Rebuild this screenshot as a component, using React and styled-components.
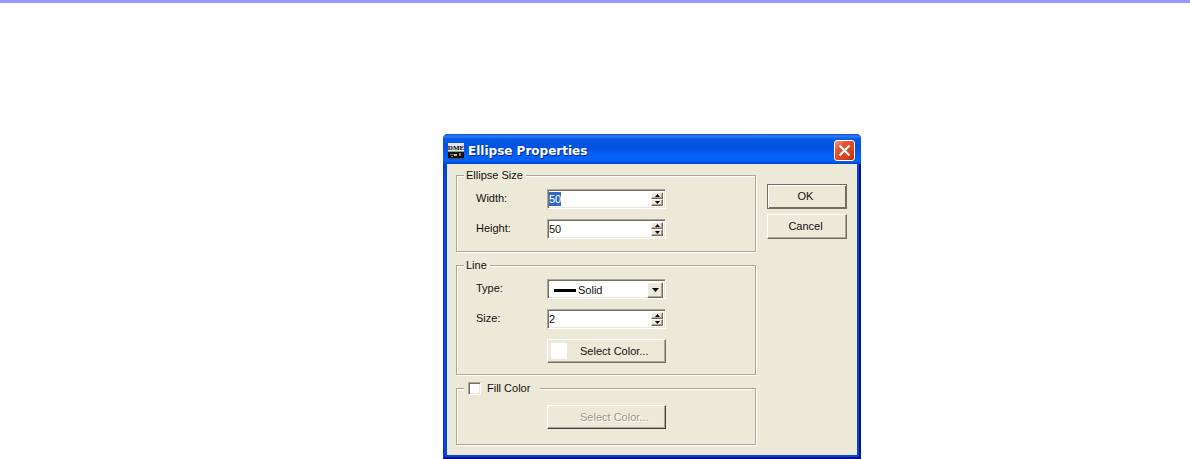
import styled, { createGlobalStyle, css } from "styled-components";
import { useEffect, useRef, useState } from "react";

const FACE = "#ece9d8";
const SHADOW = "#aca899";
const DARK = "#716f64";

const GlobalStyle = createGlobalStyle`
  * {
    box-sizing: border-box;
  }

  body {
    margin: 0;
    background: #fff;
    color: #111;
    font: 11px/13px "Liberation Sans", Arial, sans-serif;
  }

  button, input, select {
    font: inherit;
    color: inherit;
    margin: 0;
    outline: none;
  }
`;

const raised = css`
  border: 1px solid;
  border-color: #fff ${DARK} ${DARK} #fff;
  box-shadow: inset -1px -1px 0 ${SHADOW};
  background: ${FACE};
`;

const sunken = css`
  border: 1px solid;
  border-color: ${SHADOW} #fff #fff ${SHADOW};
  box-shadow: inset 1px 1px 0 ${DARK}, inset -1px -1px 0 ${FACE};
  background: #fff;
`;

const Page = styled.main`
  border-top: 3px solid #9999ff;
  padding: 131px 0 0 443px;
`;

const Dialog = styled.section`
  width: 418px;
  border-radius: 5px 5px 0 0;
  background: #0843dc;
  box-shadow: inset 1px 0 0 #0831d9, inset -2px -2px 0 #00138c;
  padding: 0 4px 4px;
`;

const TitleBar = styled.header`
  display: flex;
  align-items: center;
  gap: 4px;
  height: 30px;
  margin: 0 -4px;
  padding: 3px 6px 0 5px;
  border-radius: 5px 5px 0 0;
  background: linear-gradient(
    #0a48c8 0,
    #2a80f4 2px,
    #0a5ae6 5px,
    #0052e0 12px,
    #0660fa 23px,
    #0560f8 27px,
    #0344c8 30px
  );
`;

const Title = styled.h1`
  flex: 1;
  margin: 0;
  color: #fff;
  font: bold 12px/16px "DejaVu Sans", sans-serif;
  text-shadow: 1px 1px 0 #0a2f8c;
`;

const CloseButton = styled.button`
  display: grid;
  place-items: center;
  width: 21px;
  height: 21px;
  padding: 0;
  border: 1px solid #fff;
  border-radius: 3px;
  background: linear-gradient(135deg, #f0a088 0, #e0573a 30%, #d8421c 70%, #b8300c);
`;

const Body = styled.form`
  display: grid;
  grid-template-columns: 1fr 80px;
  gap: 11px;
  padding: 5px 10px 10px 9px;
  background: ${FACE};
`;

const Groups = styled.div`
  display: grid;
  gap: 7px;
`;

const Actions = styled.div`
  display: flex;
  flex-direction: column;
  gap: 5px;
  padding-top: 15px;
`;

const Group = styled.fieldset`
  display: grid;
  gap: ${({ $gap = 10 }) => $gap}px;
  min-width: 0;
  margin: 0;
  padding: ${({ $top = 7, $bottom }) => `${$top}px 0 ${$bottom}px 19px`};
  border: 1px solid ${SHADOW};
  box-shadow: 1px 1px 0 #fff, inset 1px 1px 0 #fff;
`;

const Legend = styled.legend`
  display: flex;
  align-items: center;
  height: 13px;
  margin-left: -12px;
  padding: 0 3px 0 2px;
  background: ${FACE};
`;

const CheckLegend = styled(Legend)`
  padding: 0 10px 0 4px;
`;

const CheckLabel = styled.label`
  display: flex;
  align-items: center;
  gap: 6px;
`;

const CheckBox = styled.input`
  appearance: none;
  width: 13px;
  height: 13px;
  ${sunken}

  &:checked {
    background: radial-gradient(#000 3px, #fff 4px);
  }
`;

const Row = styled.div`
  display: grid;
  grid-template-columns: 71px 119px;
  align-items: start;
  line-height: 18px;
`;

const FieldBox = styled.div`
  display: flex;
  height: 20px;
  padding: 2px 2px 2px 1px;
  ${sunken}
`;

const FieldInput = styled.input`
  flex: 1;
  min-width: 0;
  padding: 0;
  border: 0;
  background: none;
  line-height: 15px;

  &::selection {
    background: #316ac5;
    color: #fff;
  }
`;

const Arrows = styled.div`
  display: grid;
  grid-template-rows: 1fr 1fr;
  width: 12px;
`;

const ArrowButton = styled.button`
  display: grid;
  place-items: center;
  padding: 0;
  ${raised}
`;

const Combo = styled.div`
  display: grid;
  grid-template-columns: 1fr 16px;
  align-items: center;
  height: 20px;
  padding: 2px;
  ${sunken}

  svg {
    grid-row: 1;
    pointer-events: none;
  }
`;

const Select = styled.select`
  appearance: none;
  grid-area: 1 / 1 / 2 / 3;
  width: 100%;
  height: 16px;
  padding: 0 16px 0 28px;
  border: 0;
  background: none;
  line-height: 15px;
`;

const LineSample = styled.svg`
  grid-column: 1;
  margin-left: 4px;
`;

const DropArrow = styled.span`
  grid-area: 1 / 2;
  display: grid;
  place-items: center;
  height: 16px;
  pointer-events: none;
  ${raised}
`;

const PushButton = styled.button`
  height: 25px;
  padding: 0 3px 0 0;
  ${raised}
  ${({ $default }) =>
    $default &&
    css`
      border-color: ${DARK};
      box-shadow: inset 1px 1px 0 #fff, inset -1px -1px 0 ${DARK};
    `}
`;

const ColorButton = styled.button`
  grid-column: 2;
  display: grid;
  grid-template-columns: 16px 1fr;
  align-items: center;
  gap: 13px;
  height: 24px;
  padding: 0 3px;
  text-align: left;
  ${raised}

  &:disabled {
    border-color: #fff #404040 #404040 #fff;
    color: #9a9788;
    text-shadow: 1px 1px 0 #fff;
  }
`;

const Swatch = styled.span`
  height: 16px;
  background: ${({ $color }) => $color};
`;

const AppIcon = () => (
  <svg width="16" height="16" viewBox="0 0 16 16" aria-hidden="true">
    <rect width="16" height="8" fill="#e4e4ec" />
    <text
      x="8"
      y="7"
      textAnchor="middle"
      fontFamily="Liberation Serif, serif"
      fontWeight="bold"
      fontSize="7"
      fill="#000"
    >
      DME
    </text>
    <rect y="8" width="16" height="8" fill="#111" />
    <path d="M0 8.5h16" stroke="#9a9aa4" />
    <path d="M2 11.5h4M3 13.5h2" stroke="#777" />
    <path d="M6 11h3v2H6z" fill="#e8c21c" />
    <path d="M11 10h2v3h-2z" fill="#7080a0" />
    <path d="M0 15.5h16" stroke="#3c4c70" />
  </svg>
);

const Triangle = ({ up, size = 5 }) => {
  const h = (size + 1) / 2;
  const points = up ? `0,${h} ${size},${h} ${size / 2},0` : `0,0 ${size},0 ${size / 2},${h}`;
  return (
    <svg width={size} height={h} aria-hidden="true">
      <polygon points={points} />
    </svg>
  );
};

const NumberField = ({ id, label, initial, selected }) => {
  const [value, setValue] = useState(initial);
  const ref = useRef(null);

  useEffect(() => {
    if (selected) {
      ref.current.focus();
      ref.current.select();
    }
  }, [selected]);

  const step = (n) => setValue((p) => String(Math.max(0, Number(p) + n)));

  return (
    <Row>
      <label htmlFor={id}>{label}</label>
      <FieldBox>
        <FieldInput
          id={id}
          ref={ref}
          inputMode="numeric"
          value={value}
          onChange={(e) => setValue(e.target.value)}
        />
        <Arrows>
          <ArrowButton type="button" aria-label={`Increase ${id}`} onClick={() => step(1)}>
            <Triangle up />
          </ArrowButton>
          <ArrowButton type="button" aria-label={`Decrease ${id}`} onClick={() => step(-1)}>
            <Triangle />
          </ArrowButton>
        </Arrows>
      </FieldBox>
    </Row>
  );
};

const App = () => {
  const [fill, setFill] = useState(false);

  return (
    <>
      <GlobalStyle />
      <Page>
        <Dialog role="dialog" aria-labelledby="title">
          <TitleBar>
            <AppIcon />
            <Title id="title">Ellipse Properties</Title>
            <CloseButton type="button" aria-label="Close">
              <svg width="13" height="13" viewBox="0 0 13 13" aria-hidden="true">
                <path d="M1.5 1.5l10 10M11.5 1.5l-10 10" stroke="#fff" strokeWidth="2" />
              </svg>
            </CloseButton>
          </TitleBar>
          <Body onSubmit={(e) => e.preventDefault()}>
            <Groups>
              <Group $bottom={12}>
                <Legend>Ellipse Size</Legend>
                <NumberField id="width" label="Width:" initial="50" selected />
                <NumberField id="height" label="Height:" initial="50" />
              </Group>
              <Group $bottom={11}>
                <Legend>Line</Legend>
                <Row>
                  <label htmlFor="type">Type:</label>
                  <Combo>
                    <Select id="type">
                      <option>Solid</option>
                    </Select>
                    <LineSample width="22" height="3" aria-hidden="true">
                      <rect width="22" height="3" />
                    </LineSample>
                    <DropArrow>
                      <Triangle size={7} />
                    </DropArrow>
                  </Combo>
                </Row>
                <NumberField id="size" label="Size:" initial="2" />
                <Row>
                  <ColorButton type="button">
                    <Swatch $color="#fff" />
                    Select Color...
                  </ColorButton>
                </Row>
              </Group>
              <Group $top={10} $bottom={15}>
                <CheckLegend>
                  <CheckLabel>
                    <CheckBox
                      type="checkbox"
                      checked={fill}
                      onChange={(e) => setFill(e.target.checked)}
                    />
                    Fill Color
                  </CheckLabel>
                </CheckLegend>
                <Row>
                  <ColorButton type="button" disabled={!fill}>
                    <Swatch $color="transparent" />
                    Select Color...
                  </ColorButton>
                </Row>
              </Group>
            </Groups>
            <Actions>
              <PushButton type="submit" $default>
                OK
              </PushButton>
              <PushButton type="button">Cancel</PushButton>
            </Actions>
          </Body>
        </Dialog>
      </Page>
    </>
  );
};

export default App;
